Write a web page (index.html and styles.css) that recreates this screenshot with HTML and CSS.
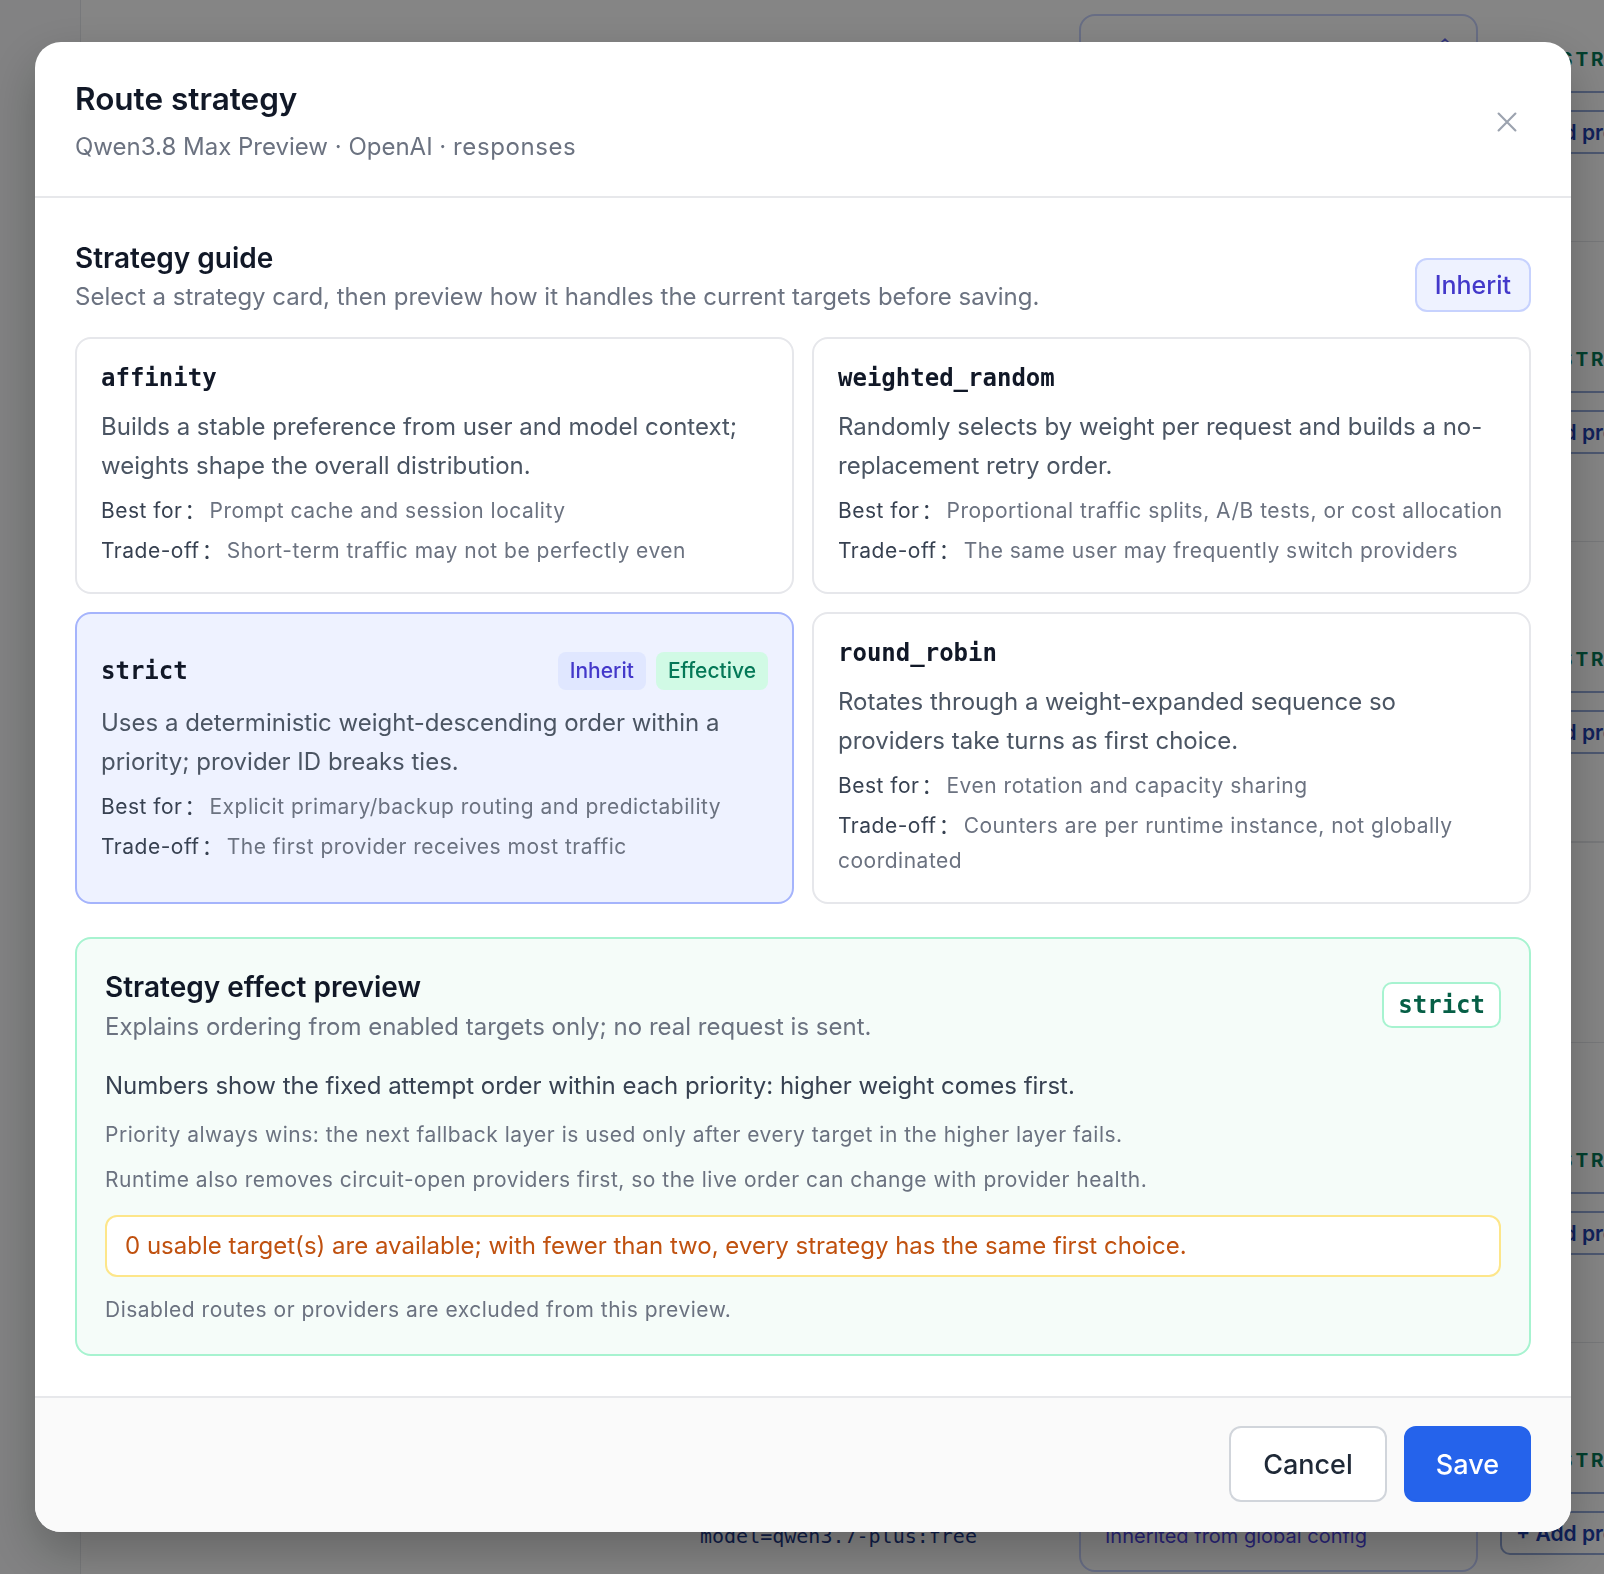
FILE: index.html
```html
<!DOCTYPE html>
<html lang="en">
<head>
<meta charset="utf-8">
<title>Route strategy</title>
<link rel="stylesheet" href="styles.css">
</head>
<body>
<div class="app">
  <aside class="rail"></aside>
  <main class="routes">
    <div class="route-row">
      <div class="route-model"></div>
      <div class="route-select">
        <svg class="chev" viewBox="0 0 12 12" width="12" height="12"><path d="M2 8 L6 4 L10 8" fill="none" stroke="#6366f1" stroke-width="1.6" stroke-linecap="round" stroke-linejoin="round"/></svg>
      </div>
      <div class="route-actions">
        <span class="route-tag">STRICT</span>
        <div class="route-line"></div>
        <span class="add-btn">+ Add provider</span>
      </div>
    </div>
    <div class="route-row">
      <div class="route-model"></div>
      <div class="route-select"></div>
      <div class="route-actions">
        <span class="route-tag">STRICT</span>
        <div class="route-line"></div>
        <span class="add-btn">+ Add provider</span>
      </div>
    </div>
    <div class="route-row">
      <div class="route-model"></div>
      <div class="route-select"></div>
      <div class="route-actions">
        <span class="route-tag">STRICT</span>
        <div class="route-line"></div>
        <span class="add-btn">+ Add provider</span>
      </div>
    </div>
    <div class="route-group"></div>
    <div class="route-row">
      <div class="route-model"></div>
      <div class="route-select"></div>
      <div class="route-actions">
        <span class="route-tag">STRICT</span>
        <div class="route-line"></div>
        <span class="add-btn">+ Add provider</span>
      </div>
    </div>
    <div class="route-row">
      <div class="route-model"><span class="model-id">model=qwen3.7-plus:free</span></div>
      <div class="route-select"><span class="select-hint">Inherited from global config</span></div>
      <div class="route-actions">
        <span class="route-tag">STRICT</span>
        <div class="route-line"></div>
        <span class="add-btn">+ Add provider</span>
      </div>
    </div>
  </main>
</div>

<div class="overlay">
  <section class="modal" role="dialog" aria-labelledby="modal-title">
    <header class="modal-head">
      <div class="head-text">
        <h2 class="modal-title" id="modal-title">Route strategy</h2>
        <p class="modal-sub">Qwen3.8 Max Preview · OpenAI · <span class="endpoint">responses</span></p>
      </div>
      <button class="close-btn" aria-label="Close">
        <svg viewBox="0 0 20 20" width="24" height="24"><path d="M3 3 L17 17 M17 3 L3 17" fill="none" stroke="#9ca3af" stroke-width="1.8" stroke-linecap="round"/></svg>
      </button>
    </header>

    <div class="modal-body">
      <div class="guide-head">
        <div>
          <h3 class="section-title">Strategy guide</h3>
          <p class="section-desc">Select a strategy card, then preview how it handles the current targets before saving.</p>
        </div>
        <button class="inherit-btn">Inherit</button>
      </div>

      <div class="strategy-grid">
        <div class="strategy-card">
          <div class="card-head"><span class="card-title">affinity</span></div>
          <p class="card-desc">Builds a stable preference from user and model context; weights shape the overall distribution.</p>
          <div class="card-meta">
            <p><span class="meta-label">Best for<span class="colon">：</span></span>Prompt cache and session locality</p>
            <p><span class="meta-label">Trade-off<span class="colon">：</span></span>Short-term traffic may not be perfectly even</p>
          </div>
        </div>
        <div class="strategy-card">
          <div class="card-head"><span class="card-title">weighted_random</span></div>
          <p class="card-desc">Randomly selects by weight per request and builds a no-replacement retry order.</p>
          <div class="card-meta">
            <p><span class="meta-label">Best for<span class="colon">：</span></span>Proportional traffic splits, A/B tests, or cost allocation</p>
            <p><span class="meta-label">Trade-off<span class="colon">：</span></span>The same user may frequently switch providers</p>
          </div>
        </div>
        <div class="strategy-card is-selected">
          <div class="card-head">
            <span class="card-title">strict</span>
            <span class="badges">
              <span class="badge badge-inherit">Inherit</span>
              <span class="badge badge-effective">Effective</span>
            </span>
          </div>
          <p class="card-desc">Uses a deterministic weight-descending order within a priority; provider ID breaks ties.</p>
          <div class="card-meta">
            <p><span class="meta-label">Best for<span class="colon">：</span></span>Explicit primary/backup routing and predictability</p>
            <p><span class="meta-label">Trade-off<span class="colon">：</span></span>The first provider receives most traffic</p>
          </div>
        </div>
        <div class="strategy-card">
          <div class="card-head"><span class="card-title">round_robin</span></div>
          <p class="card-desc">Rotates through a weight-expanded sequence so providers take turns as first choice.</p>
          <div class="card-meta">
            <p><span class="meta-label">Best for<span class="colon">：</span></span>Even rotation and capacity sharing</p>
            <p><span class="meta-label">Trade-off<span class="colon">：</span></span>Counters are per runtime instance, not globally coordinated</p>
          </div>
        </div>
      </div>

      <div class="preview">
        <div class="preview-head">
          <div>
            <h3 class="section-title">Strategy effect preview</h3>
            <p class="preview-desc">Explains ordering from enabled targets only; no real request is sent.</p>
          </div>
          <span class="preview-tag">strict</span>
        </div>
        <p class="preview-lead">Numbers show the fixed attempt order within each priority: higher weight comes first.</p>
        <p class="preview-note note-first">Priority always wins: the next fallback layer is used only after every target in the higher layer fails.</p>
        <p class="preview-note">Runtime also removes circuit-open providers first, so the live order can change with provider health.</p>
        <div class="preview-warn">0 usable target(s) are available; with fewer than two, every strategy has the same first choice.</div>
        <p class="preview-foot">Disabled routes or providers are excluded from this preview.</p>
      </div>
    </div>

    <footer class="modal-foot">
      <button class="btn btn-cancel">Cancel</button>
      <button class="btn btn-save">Save</button>
    </footer>
  </section>
</div>
</body>
</html>
```

FILE: styles.css
```css
* { box-sizing: border-box; }

html, body {
  margin: 0;
  padding: 0;
  height: 100%;
}

body {
  font-family: "Inter", "Noto Sans CJK SC", sans-serif;
  color: #111827;
  background: #ffffff;
  overflow: hidden;
}

p, h2, h3 { margin: 0; }

button {
  font-family: inherit;
  cursor: pointer;
}

/* ---------- page underneath the dialog ---------- */

.app {
  display: flex;
  height: 1574px;
  overflow: hidden;
}

.rail {
  width: 81px;
  flex: none;
  background: #f9fafb;
  border-right: 1px solid #e5e7eb;
}

.routes {
  flex: 1;
  display: flex;
  flex-direction: column;
  margin-top: -58px;
}

.route-row {
  flex: none;
  height: 300px;
  display: grid;
  grid-template-columns: 379px 399px 1fr;
  padding-left: 619px;
  border-bottom: 1px solid #e5e7eb;
}

.route-model {
  padding-top: 180px;
}

.model-id {
  font-family: "DejaVu Sans Mono", monospace;
  font-size: 20px;
  color: #1e3a8a;
  line-height: 26px;
}

.route-select {
  margin-top: 72px;
  height: 157px;
  border: 2px solid #c7d2fe;
  border-radius: 16px;
  background: #fff;
  display: flex;
  flex-direction: column;
  align-items: flex-end;
  justify-content: flex-end;
  padding: 19px 25px 20px 24px;
}

.chev {
  align-self: flex-end;
  margin-bottom: auto;
}

.select-hint {
  align-self: flex-start;
  font-size: 20px;
  color: #4f46e5;
  line-height: 28px;
}

.route-actions {
  padding-left: 22px;
  display: flex;
  flex-direction: column;
  align-items: flex-start;
}

.route-tag {
  margin-top: 106px;
  margin-left: 60px;
  font-size: 19px;
  font-weight: 700;
  letter-spacing: 3px;
  color: #047857;
  line-height: 24px;
}

.route-line {
  margin-top: 19px;
  width: 100%;
  height: 2px;
  background: #93a8d8;
}

.add-btn {
  margin-top: 17px;
  height: 44px;
  padding: 0 14px;
  display: flex;
  align-items: center;
  border: 2px solid #93a8d8;
  border-right: 0;
  border-radius: 10px 0 0 10px;
  font-size: 21px;
  font-weight: 600;
  color: #1e40af;
  white-space: nowrap;
  width: 100%;
}

.route-group {
  flex: none;
  height: 201px;
  border-top: 1px solid #e5e7eb;
  border-bottom: 1px solid #e5e7eb;
}

/* ---------- dialog ---------- */

.overlay {
  position: fixed;
  inset: 0;
  background: rgba(0, 0, 0, 0.48);
  display: flex;
  justify-content: center;
  align-items: flex-start;
  padding: 42px 0 0 2px;
}

.modal {
  width: 1536px;
  background: #ffffff;
  border-radius: 26px;
  overflow: hidden;
  box-shadow: 0 20px 50px rgba(0, 0, 0, 0.25);
}

.modal-head {
  display: flex;
  justify-content: space-between;
  align-items: center;
  padding: 39px 40px 33px;
  border-bottom: 2px solid #e7e8eb;
}

.modal-title {
  font-size: 31.5px;
  line-height: 36px;
  font-weight: 600;
  color: #111827;
}

.modal-sub {
  margin-top: 14px;
  font-size: 24px;
  line-height: 32px;
  color: #6b7280;
}

.endpoint {
  letter-spacing: 0.6px;
}

.close-btn {
  background: none;
  border: 0;
  padding: 0;
  margin-right: 12px;
  display: flex;
}

.modal-body {
  padding: 44px 40px 40px;
}

.guide-head {
  display: flex;
  justify-content: space-between;
  align-items: flex-end;
  margin-bottom: 25px;
}

.section-title {
  font-size: 28px;
  line-height: 32px;
  font-weight: 600;
  color: #111827;
}

.section-desc {
  margin-top: 8px;
  font-size: 24px;
  line-height: 30px;
  color: #6b7280;
}

.inherit-btn {
  height: 54px;
  padding: 0 18px;
  border: 2px solid #c7d2fe;
  background: #eef2ff;
  color: #4338ca;
  font-size: 25px;
  font-weight: 500;
  border-radius: 12px;
}

.strategy-grid {
  display: grid;
  grid-template-columns: 1fr 1fr;
  gap: 18px;
}

.strategy-card {
  border: 2px solid #e6e7eb;
  border-radius: 16px;
  padding: 23px 24px 24px;
  background: #ffffff;
  display: flex;
  flex-direction: column;
  justify-content: center;
}

.strategy-card.is-selected {
  background: #eef2ff;
  border-color: #a5b4fc;
}

.card-head {
  display: flex;
  align-items: center;
  justify-content: space-between;
}

.card-title {
  font-family: "DejaVu Sans Mono", "Liberation Mono", monospace;
  font-size: 24px;
  line-height: 32px;
  font-weight: 700;
  color: #111827;
}

.badges {
  display: flex;
  gap: 10px;
}

.badge {
  height: 38px;
  padding: 0 12px;
  display: flex;
  align-items: center;
  border-radius: 8px;
  font-size: 21px;
  font-weight: 500;
}

.badge-inherit {
  background: #e0e7ff;
  color: #4338ca;
}

.badge-effective {
  background: #d1fae5;
  color: #047857;
}

.card-desc {
  margin-top: 13px;
  font-size: 24px;
  line-height: 39px;
  color: #4b5563;
}

.card-meta {
  margin-top: 8px;
  display: flex;
  flex-direction: column;
  gap: 5px;
  font-size: 21px;
  line-height: 35px;
  letter-spacing: 0.5px;
  color: #6b7280;
}

.meta-label {
  color: #374151;
}

/* full-width colon from the CJK face, kept from stretching the line box */
.colon {
  line-height: 1;
  letter-spacing: 0;
  padding-left: 2px;
  margin-right: 4px;
}

.preview {
  margin-top: 33px;
  border: 2px solid #a7f3d0;
  border-radius: 16px;
  background: #f5fcf9;
  padding: 32px 28px 29px;
}

.preview-head {
  display: flex;
  justify-content: space-between;
  align-items: flex-start;
}

.preview-desc {
  margin-top: 9px;
  font-size: 24px;
  line-height: 30px;
  color: #6b7280;
}

.preview-tag {
  margin-top: 11px;
  height: 46px;
  padding: 0 14px;
  display: flex;
  align-items: center;
  border: 2px solid #a7f3d0;
  border-radius: 10px;
  background: #ffffff;
  font-family: "DejaVu Sans Mono", "Liberation Mono", monospace;
  font-size: 24px;
  font-weight: 700;
  color: #065f46;
}

.preview-lead {
  margin-top: 28px;
  font-size: 24px;
  line-height: 32px;
  color: #374151;
}

.preview-note {
  margin-top: 15px;
  font-size: 21px;
  line-height: 30px;
  letter-spacing: 0.5px;
  color: #6b7280;
}

.preview-note.note-first {
  margin-top: 18px;
}

.preview-warn {
  margin-top: 20px;
  border: 2px solid #fde68a;
  border-radius: 12px;
  background: #ffffff;
  padding: 14px 18px;
  font-size: 24px;
  line-height: 30px;
  color: #c0510f;
}

.preview-foot {
  margin-top: 18px;
  font-size: 21px;
  line-height: 30px;
  letter-spacing: 0.5px;
  color: #6b7280;
}

.modal-foot {
  display: flex;
  justify-content: flex-end;
  gap: 17px;
  padding: 28px 40px 30px;
  background: #fafafa;
  border-top: 2px solid #e7e8eb;
}

.btn {
  height: 76px;
  padding: 0 32px;
  border-radius: 12px;
  font-size: 27px;
  font-weight: 500;
}

.btn-cancel {
  background: #ffffff;
  border: 2px solid #d1d5db;
  color: #1f2937;
}

.btn-save {
  padding: 0 30px;
  background: #2563eb;
  border: 2px solid #2563eb;
  color: #ffffff;
}
```
